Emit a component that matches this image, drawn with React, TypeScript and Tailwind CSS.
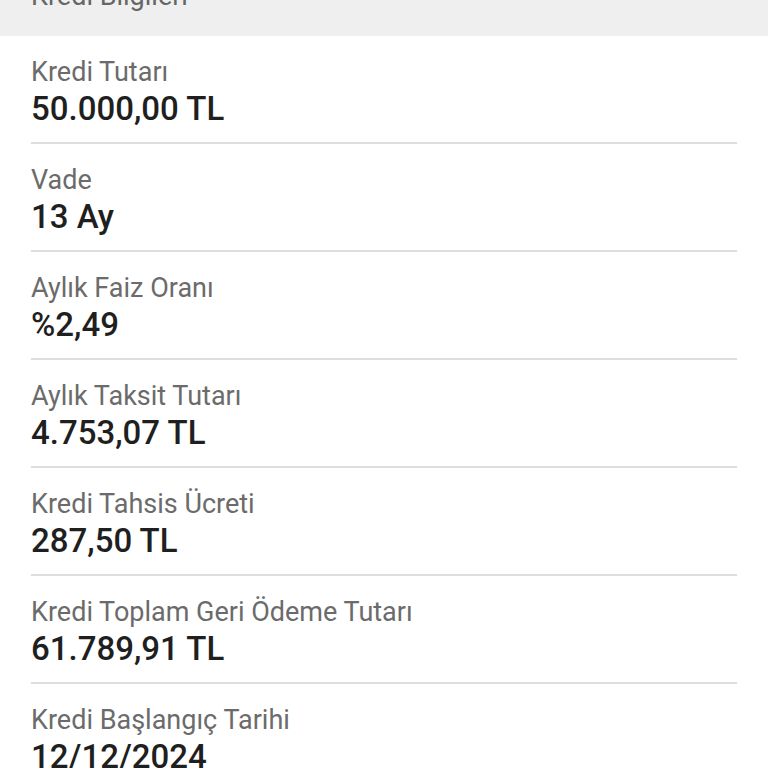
import React from "react";

type Row = {
  label: string;
  value: string;
};

const rows: Row[] = [
  { label: "Kredi Tutarı", value: "50.000,00 TL" },
  { label: "Vade", value: "13 Ay" },
  { label: "Aylık Faiz Oranı", value: "%2,49" },
  { label: "Aylık Taksit Tutarı", value: "4.753,07 TL" },
  { label: "Kredi Tahsis Ücreti", value: "287,50 TL" },
  { label: "Kredi Toplam Geri Ödeme Tutarı", value: "61.789,91 TL" },
  { label: "Kredi Başlangıç Tarihi", value: "12/12/2024" },
];

const App = () => {
  return (
    <div
      className="w-[768px] h-[768px] overflow-hidden bg-white"
      style={{ fontFamily: "Roboto, 'Noto Sans', sans-serif" }}
    >
      {/* section header, scrolled mostly out of view */}
      <div className="h-[36px] bg-[#efefef] overflow-hidden">
        <div className="pl-[31px] -mt-[19px] text-[27px] leading-[30px] text-[#666]">
          Kredi Bilgileri
        </div>
      </div>

      {rows.map((r, i) => (
        <div key={i} className="mx-[31px]">
          <div className="pt-[21px] pb-[15px]">
            <div className="text-[27px] leading-[30px] text-[#6b6b6b]">{r.label}</div>
            <div className="mt-[4px] text-[33px] leading-[36px] font-medium text-[#1f1f1f]">
              {r.value}
            </div>
          </div>
          <div className="h-[2px] bg-[#dedede]" />
        </div>
      ))}
    </div>
  );
};

export default App;
